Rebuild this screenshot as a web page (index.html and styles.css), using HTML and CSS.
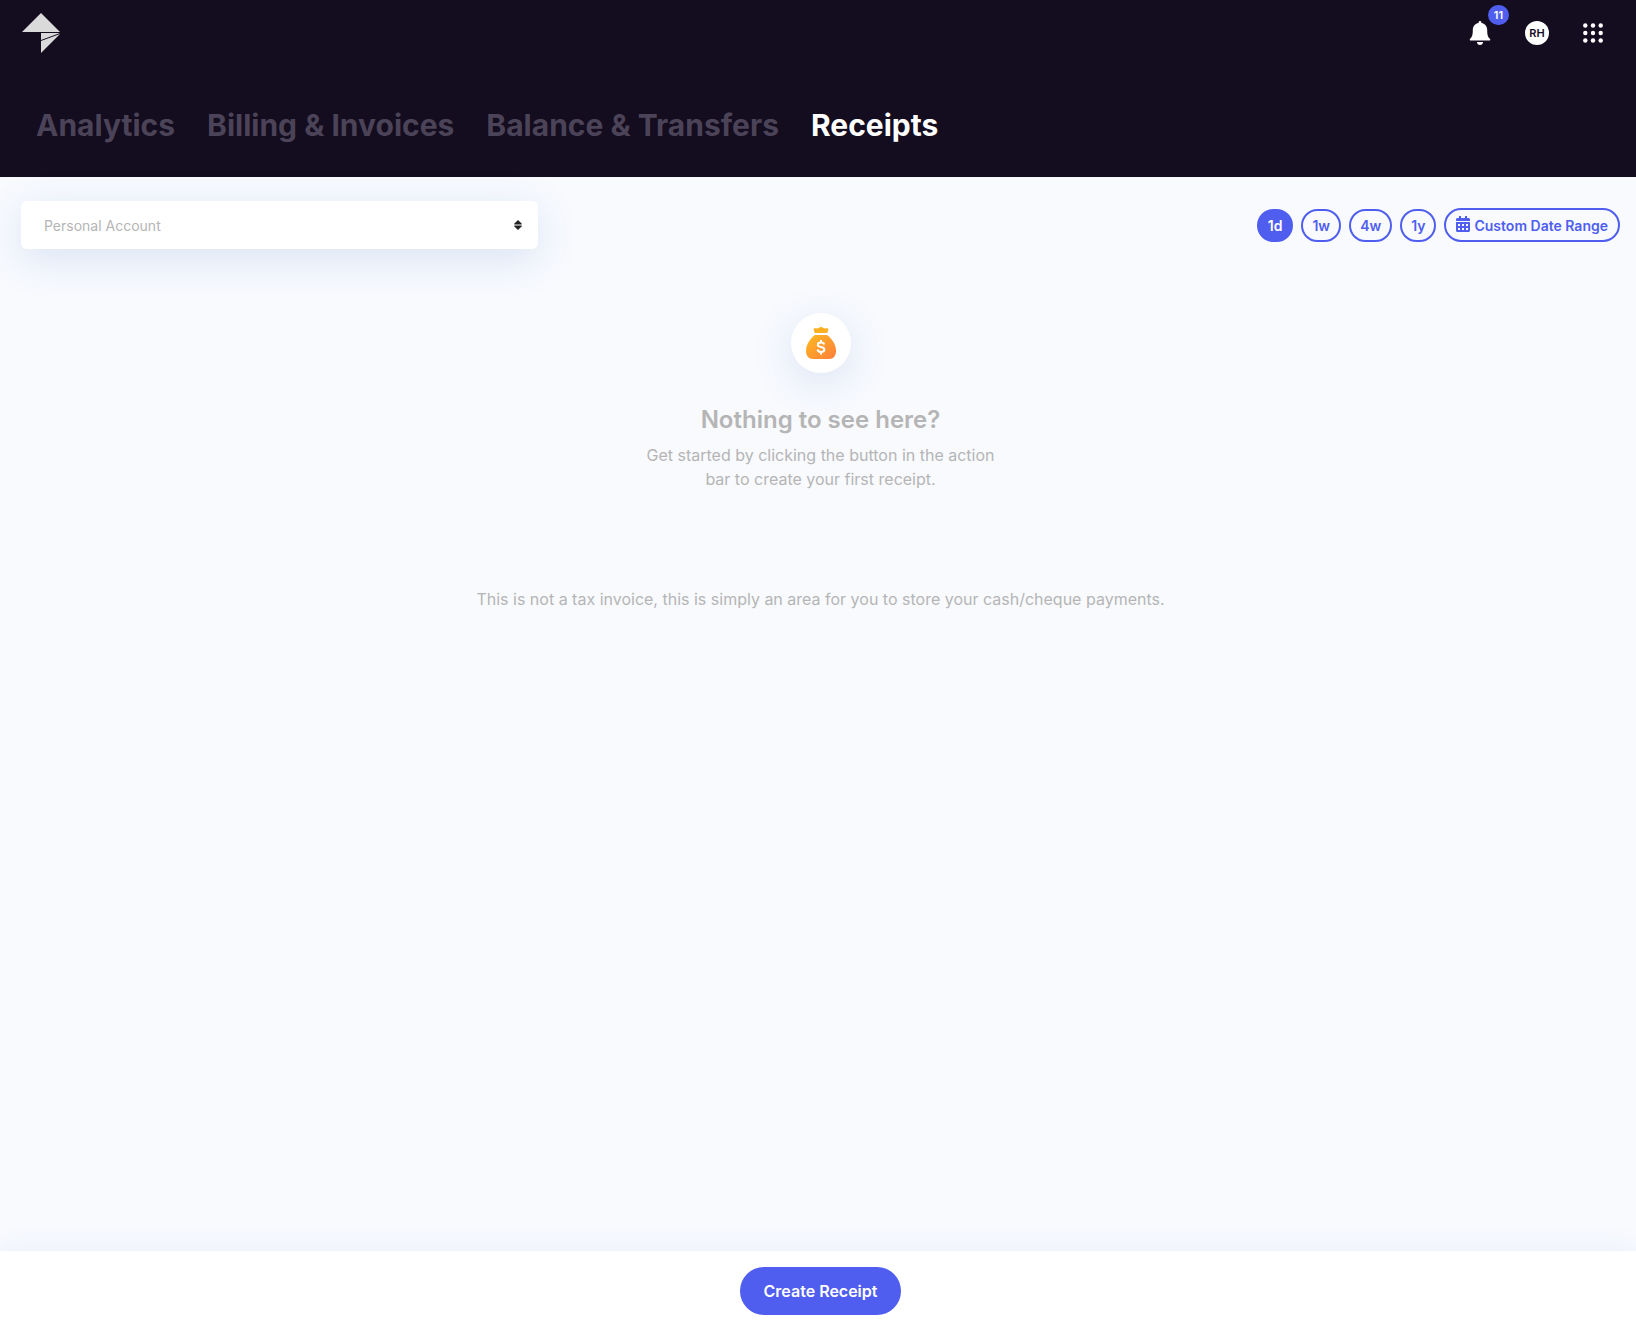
FILE: index.html
```html
<!DOCTYPE html>
<html lang="en">
<head>
  <meta charset="UTF-8">
  <meta name="viewport" content="width=device-width, initial-scale=1">
  <title>Receipts</title>
  <link rel="stylesheet" href="styles.css">
</head>
<body>
  <header class="header">
    <div class="topbar">
      <a class="logo" href="#" aria-label="Home">
        <svg width="40" height="40" viewBox="0 0 40 40" fill="#dadada">
          <path d="M20 0L39 19H1z"/>
          <path d="M20 20H39L20 27z"/>
          <path d="M39 21L20 40V28z"/>
        </svg>
      </a>
      <div class="actions">
        <button class="icon-btn" aria-label="Notifications">
          <svg width="22" height="24" viewBox="0 0 22 24" fill="#fff">
            <path d="M11 0c.8 0 1.400.6 1.400 1.300v.8c3.400.6 5.800 3.400 5.800 6.900 0 4.800.7 7 2.600 8.700.4.4.6.8.4 1.200-.1.400-.5.600-1 .600H1.800c-.5 0-.9-.2-1-.6-.2-.4 0-.8.4-1.200C3.100 16 3.800 13.800 3.800 9c0-3.500 2.400-6.300 5.800-6.900v-.8C9.600.6 10.200 0 11 0z"/>
            <path d="M8 21h6c0 1.700-1.300 3-3 3s-3-1.300-3-3z"/>
          </svg>
          <span class="badge">11</span>
        </button>
        <button class="avatar">RH</button>
        <button class="icon-btn" aria-label="Apps">
          <svg width="20" height="20" viewBox="0 0 20 20" fill="#fff">
            <circle cx="2.300" cy="2.500" r="2.200"/><circle cx="10" cy="2.500" r="2.200"/><circle cx="17.700" cy="2.500" r="2.200"/>
            <circle cx="2.300" cy="10" r="2.200"/><circle cx="10" cy="10" r="2.200"/><circle cx="17.700" cy="10" r="2.200"/>
            <circle cx="2.300" cy="17.500" r="2.200"/><circle cx="10" cy="17.500" r="2.200"/><circle cx="17.700" cy="17.500" r="2.200"/>
          </svg>
        </button>
      </div>
    </div>
    <nav class="tabs">
      <a href="#">Analytics</a>
      <a href="#">Billing &amp; Invoices</a>
      <a href="#">Balance &amp; Transfers</a>
      <a href="#" class="active">Receipts</a>
    </nav>
  </header>

  <main class="content">
    <div class="filters">
      <div class="account">
        <select class="account-select" aria-label="Account">
          <option>Personal Account</option>
        </select>
        <svg class="sort-icon" width="8" height="10" viewBox="0 0 8 10" fill="#222">
          <path d="M4 0l3.600 3.400c.4.4.2 1-.4 1H.8c-.6 0-.8-.6-.4-1z"/>
          <path d="M4 10l3.600-3.400c.4-.4.2-1-.4-1H.8c-.6 0-.8.6-.4 1z"/>
        </svg>
      </div>
      <div class="ranges">
        <button class="range selected">1d</button>
        <button class="range">1w</button>
        <button class="range">4w</button>
        <button class="range">1y</button>
        <button class="range custom">
          <svg width="14" height="16" viewBox="0 0 14 16" fill="#4f5eef">
            <path fill-rule="evenodd" d="M0 6h14v8.500c0 .8-.7 1.500-1.500 1.500h-11C.7 16 0 15.300 0 14.500zM2 8v2h2V8zm4 0v2h2V8zm4 0v2h2V8zM2 12v2h2v-2zm4 0v2h2v-2zm4 0v2h2v-2z"/>
            <path d="M0 5V3.500C0 2.700.7 2 1.500 2H3V0h2v2h4V0h2v2h1.500c.8 0 1.500.7 1.500 1.500V5z"/>
          </svg>
          Custom Date Range
        </button>
      </div>
    </div>

    <section class="empty">
      <div class="empty-icon">
        <svg width="30" height="32" viewBox="0 0 30 32">
          <defs>
            <linearGradient id="bag" x1="0" y1="0" x2="1" y2="1">
              <stop offset="0" stop-color="#fdbb1f"/>
              <stop offset="1" stop-color="#ff7d3c"/>
            </linearGradient>
          </defs>
          <path fill="#fbb022" d="M8 1.500c2-.6 3.200.4 4.600-.5 1.400-1.200 3.400-1.200 4.800 0 1.400.9 2.600-.1 4.600.5.500.2.500.7.300 1.100L21.300 6H8.700L7.700 2.600C7.500 2.200 7.500 1.700 8 1.500z"/>
          <path fill="url(#bag)" d="M9 8h12c4.500 3.300 9 9.500 9 15.500 0 5.500-2.500 8.500-7 8.500H7c-4.500 0-7-3-7-8.500C0 17.500 4.500 11.300 9 8z"/>
          <path fill="none" stroke="#fff" stroke-width="2" d="M18.200 17.400c-.4-1.500-1.600-2-3.200-2-1.900 0-3.200.9-3.200 2.300 0 3.400 6.600 1.300 6.600 4.800 0 1.500-1.400 2.400-3.400 2.400-1.900 0-3.200-.8-3.500-2.400M15 13v2.400M15 25v2.500"/>
        </svg>
      </div>
      <h1>Nothing to see here?</h1>
      <p class="hint">Get started by clicking the button in the action<br>bar to create your first receipt.</p>
      <p class="note">This is not a tax invoice, this is simply an area for you to store your cash/cheque payments.</p>
    </section>
  </main>

  <footer class="footer">
    <button class="create">Create Receipt</button>
  </footer>
</body>
</html>
```
FILE: styles.css
```css
* {
  box-sizing: border-box;
}
body {
  margin: 0;
  min-height: 100vh;
  display: flex;
  flex-direction: column;
  font-family: Inter, sans-serif;
  background: #f8fafe;
  color: #b5b5b5;
}
button, select {
  font-family: inherit;
  cursor: pointer;
}
.header {
  background: #140c1f;
}
.topbar {
  display: flex;
  justify-content: space-between;
  align-items: flex-start;
  padding: 13px 33px 0 21px;
}
.logo svg {
  display: block;
}
.actions {
  display: flex;
  align-items: center;
  gap: 34px;
  height: 40px;
}
.icon-btn {
  position: relative;
  display: flex;
  padding: 0;
  border: none;
  background: none;
}
.badge {
  position: absolute;
  top: -16px;
  right: -18px;
  width: 21px;
  border-radius: 10px;
  background: #4f5eef;
  color: white;
  font-size: 11px;
  font-weight: 600;
  line-height: 20px;
  text-align: center;
}
.avatar {
  width: 24px;
  height: 24px;
  padding: 0;
  border: none;
  border-radius: 50%;
  background: white;
  color: #140c1f;
  font-size: 11px;
  font-weight: 600;
}
.tabs {
  display: flex;
  flex-wrap: wrap;
  gap: 32px;
  padding: 52px 36px 32px;
}
.tabs a {
  color: #4b4357;
  font-size: 30px;
  font-weight: 700;
  line-height: 40px;
  text-decoration: none;
}
.tabs .active {
  color: white;
}
.content {
  flex: 1;
  padding: 24px 16px 24px 21px;
}
.filters {
  display: flex;
  flex-wrap: wrap;
  justify-content: space-between;
  align-items: center;
  gap: 16px;
}
.account {
  position: relative;
  width: calc(33.333% - 16px);
}
.account-select {
  display: block;
  width: 100%;
  height: 48px;
  padding: 0 40px 0 23px;
  border: none;
  border-radius: 6px;
  appearance: none;
  background: white;
  color: #b5b5b5;
  font-size: 14px;
  box-shadow: 0 10px 40px rgba(50, 95, 180, 0.15);
}
.sort-icon {
  position: absolute;
  top: 19px;
  right: 16px;
  pointer-events: none;
}
.ranges {
  display: flex;
  align-items: flex-end;
  gap: 8px;
}
.range {
  height: 33px;
  padding: 0 9px;
  border: 2px solid #4f5eef;
  border-radius: 17px;
  background: none;
  color: #4f5eef;
  font-size: 14px;
  font-weight: 600;
}
.range.selected {
  background: #4f5eef;
  color: white;
}
.range.custom {
  display: flex;
  align-items: center;
  gap: 4px;
  height: 34px;
  padding: 0 10px;
}
.range.custom svg {
  margin-bottom: 2px;
}
.empty {
  padding-top: 64px;
  text-align: center;
}
.empty-icon {
  display: flex;
  align-items: center;
  justify-content: center;
  width: 60px;
  height: 60px;
  margin: 0 auto;
  border-radius: 50%;
  background: white;
  box-shadow: 0 10px 40px rgba(50, 95, 180, 0.15);
}
.empty h1 {
  margin: 31px 0 7px;
  font-size: 24px;
  font-weight: 600;
  line-height: 32px;
}
.empty p {
  margin: 0;
  font-size: 16px;
  line-height: 24px;
}
.empty .note {
  margin-top: 96px;
}
.footer {
  padding: 16px 16px 16px 21px;
  background: white;
  text-align: center;
  box-shadow: 0 0 30px rgba(50, 95, 180, 0.08);
}
.create {
  height: 48px;
  padding: 0 24px;
  border: none;
  border-radius: 24px;
  background: #4f5eef;
  color: white;
  font-size: 16px;
  font-weight: 600;
}
```
